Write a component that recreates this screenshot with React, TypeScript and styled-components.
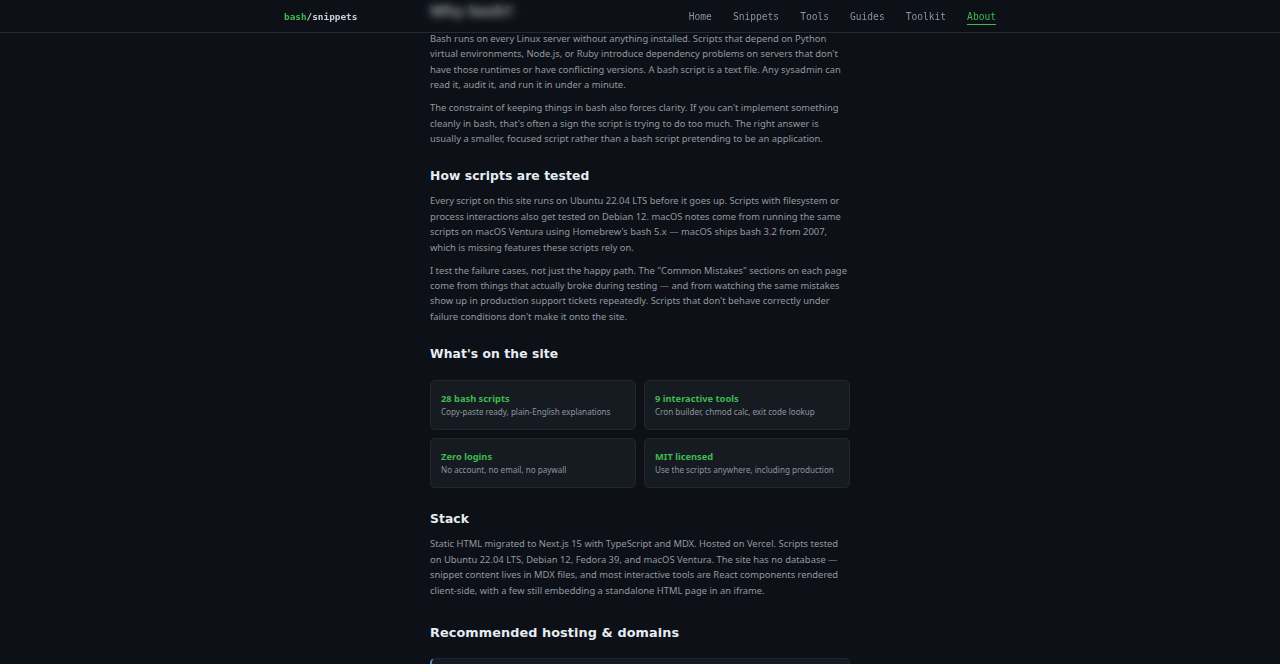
import styled, { createGlobalStyle } from "styled-components";

const GlobalStyle = createGlobalStyle`
  html, body {
    margin: 0;
    padding: 0;
    background: #0d1117;
  }
  body {
    font-family: "Noto Sans", "Open Sans", sans-serif;
    color: #8b949e;
  }
`;

const navItems = ["Home", "Snippets", "Tools", "Guides", "Toolkit", "About"];

const features = [
  { title: "28 bash scripts", text: "Copy-paste ready, plain-English explanations" },
  { title: "9 interactive tools", text: "Cron builder, chmod calc, exit code lookup" },
  { title: "Zero logins", text: "No account, no email, no paywall" },
  { title: "MIT licensed", text: "Use the scripts anywhere, including production" },
];

const App = () => {
  return (
    <>
      <GlobalStyle />
      <Header>
        <HeaderInner>
          <Logo>
            <span>bash</span>/snippets
          </Logo>
          <Nav>
            {navItems.map((item) => (
              <NavLink key={item} $active={item === "About"}>
                {item}
              </NavLink>
            ))}
          </Nav>
        </HeaderInner>
      </Header>

      <Main>
        <Heading $first>Why bash?</Heading>
        <Para>
          Bash runs on every Linux server without anything installed. Scripts that depend on Python
          virtual environments, Node.js, or Ruby introduce dependency problems on servers that don't
          have those runtimes or have conflicting versions. A bash script is a text file. Any sysadmin can
          read it, audit it, and run it in under a minute.
        </Para>
        <Para>
          The constraint of keeping things in bash also forces clarity. If you can't implement something
          cleanly in bash, that's often a sign the script is trying to do too much. The right answer is
          usually a smaller, focused script rather than a bash script pretending to be an application.
        </Para>

        <Heading>How scripts are tested</Heading>
        <Para>
          Every script on this site runs on Ubuntu 22.04 LTS before it goes up. Scripts with filesystem or
          process interactions also get tested on Debian 12. macOS notes come from running the same
          scripts on macOS Ventura using Homebrew's bash 5.x — macOS ships bash 3.2 from 2007,
          which is missing features these scripts rely on.
        </Para>
        <Para>
          I test the failure cases, not just the happy path. The "Common Mistakes" sections on each page
          come from things that actually broke during testing — and from watching the same mistakes
          show up in production support tickets repeatedly. Scripts that don't behave correctly under
          failure conditions don't make it onto the site.
        </Para>

        <Heading>What's on the site</Heading>
        <FeatureGrid>
          {features.map((f) => (
            <FeatureCard key={f.title}>
              <FeatureTitle>{f.title}</FeatureTitle>
              <FeatureText>{f.text}</FeatureText>
            </FeatureCard>
          ))}
        </FeatureGrid>

        <Heading>Stack</Heading>
        <Para>
          Static HTML migrated to Next.js 15 with TypeScript and MDX. Hosted on Vercel. Scripts tested
          on Ubuntu 22.04 LTS, Debian 12, Fedora 39, and macOS Ventura. The site has no database —
          snippet content lives in MDX files, and most interactive tools are React components rendered
          client-side, with a few still embedding a standalone HTML page in an iframe.
        </Para>

        <Heading $spaced>Recommended hosting &amp; domains</Heading>
        <HostingCard />
      </Main>
    </>
  );
};

const Header = styled.header`
  position: fixed;
  top: 0;
  left: 0;
  right: 0;
  height: 32px;
  z-index: 10;
  background: rgba(13, 17, 23, 0.35);
  backdrop-filter: blur(4px);
  border-bottom: 1px solid #262b32;
`;

const HeaderInner = styled.div`
  width: 712px;
  height: 100%;
  margin: 0 auto;
  display: flex;
  align-items: center;
  justify-content: space-between;
`;

const Logo = styled.div`
  font-family: "DejaVu Sans Mono", "Liberation Mono", monospace;
  font-size: 9.4px;
  font-weight: 700;
  color: #c9d1d9;
  span {
    color: #3fb950;
  }
`;

const Nav = styled.nav`
  display: flex;
  gap: 21px;
`;

const NavLink = styled.a<{ $active?: boolean }>`
  font-family: "DejaVu Sans Mono", "Liberation Mono", monospace;
  font-size: 9.6px;
  color: ${(p) => (p.$active ? "#3fb950" : "#8b949e")};
  padding-bottom: 2px;
  border-bottom: 1px solid ${(p) => (p.$active ? "#3fb950" : "transparent")};
  margin-top: 3px;
`;

const Main = styled.main`
  width: 420px;
  margin: 0 auto;
  padding: 2px 0 40px;
`;

const Heading = styled.h2<{ $first?: boolean; $spaced?: boolean }>`
  font-family: "DejaVu Sans", "Inter", sans-serif;
  font-weight: 700;
  font-size: ${(p) => (p.$first ? "13.5px" : p.$spaced ? "12.8px" : "12.3px")};
  letter-spacing: 0.1px;
  line-height: 18px;
  color: #e6edf3;
  margin: ${(p) => (p.$first ? "0" : p.$spaced ? "26px" : "21px")} 0 ${(p) => (p.$first ? "11px" : "8px")};
`;

const Para = styled.p`
  font-size: 9.4px;
  line-height: 15.4px;
  color: #9198a1;
  margin: 0 0 7.6px;
`;

const FeatureGrid = styled.div`
  display: grid;
  grid-template-columns: 1fr 1fr;
  gap: 8px;
  margin: 17px 0 22px;
`;

const FeatureCard = styled.div`
  height: 50px;
  box-sizing: border-box;
  padding: 0 10px;
  background: #161b22;
  border: 1px solid #22272e;
  border-radius: 5px;
  display: flex;
  flex-direction: column;
  justify-content: center;
  gap: 1px;
`;

const FeatureTitle = styled.div`
  font-size: 9.3px;
  font-weight: 700;
  color: #3fb950;
  line-height: 13px;
`;

const FeatureText = styled.div`
  font-size: 8.1px;
  color: #8b949e;
  line-height: 12px;
`;

const HostingCard = styled.div`
  margin-top: 16px;
  height: 60px;
  background: #141a22;
  border: 1px solid #1f2630;
  border-left: 2px solid #4c8ed9;
  border-radius: 5px;
`;

export default App;
